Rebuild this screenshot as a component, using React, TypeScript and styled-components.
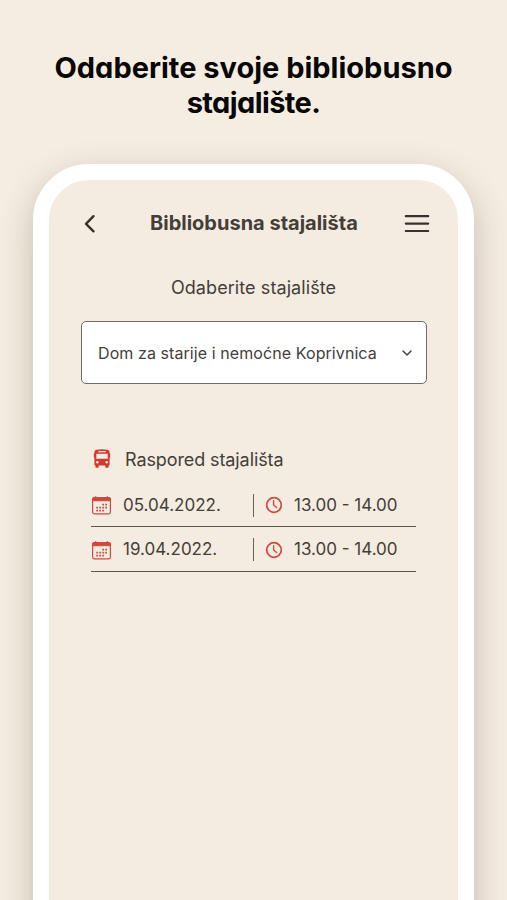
import React from 'react';
import styled, { createGlobalStyle } from 'styled-components';

const GlobalStyle = createGlobalStyle`
  * { box-sizing: border-box; }
  body { margin: 0; background: #f5ede2; }
  svg { flex: none; display: block; }
`;

const Page = styled.main`
  width: 507px;
  height: 900px;
  overflow: hidden;
  display: flex;
  flex-direction: column;
  align-items: center;
  background: #f5ede2;
  color: #443e39;
  font-family: Inter, 'Noto Sans', sans-serif;
`;

const Headline = styled.h1`
  margin: 50px 0 0;
  height: 114px;
  flex: none;
  display: flex;
  flex-direction: column;
  align-items: center;
  color: #080705;
  font-size: 29px;
  line-height: 35px;
  font-weight: 700;
  white-space: nowrap;
  font-feature-settings: 'cv11';
`;

const HeadlineLine = styled.span<{ $track: number }>`
  letter-spacing: ${(p) => p.$track}px;
`;

const Phone = styled.section`
  width: 441px;
  height: 860px;
  flex: none;
  border: 16px solid #fff;
  border-radius: 56px;
  background: #f4ece0;
  box-shadow: 0 12px 34px rgba(86, 72, 56, 0.3);
`;

const TopBar = styled.header`
  height: 86px;
  padding: 0 28px 0 35px;
  display: flex;
  align-items: center;
`;

const Title = styled.h2`
  margin: 0 auto 0 54px;
  font-size: 20px;
  line-height: 24px;
  font-weight: 700;
  white-space: nowrap;
`;

const Prompt = styled.p`
  margin: 10px 0 0;
  font-size: 18px;
  line-height: 24px;
  letter-spacing: 0.08px;
  text-align: center;
`;

const Select = styled.button`
  width: 346px;
  height: 63px;
  margin: 21px 0 0 32px;
  padding: 0 13px 0 16px;
  display: flex;
  align-items: center;
  justify-content: space-between;
  background: #fff;
  border: 1px solid #716b65;
  border-radius: 5px;
  color: inherit;
  font-family: inherit;
  font-size: 16px;
  letter-spacing: 0.08px;
  white-space: nowrap;
`;

const Schedule = styled.section`
  width: 325px;
  margin: 62px 0 0 42px;
`;

const ScheduleTitle = styled.h3`
  margin: 0;
  height: 26px;
  display: flex;
  align-items: center;
  gap: 13px;
  padding-left: 1px;
  font-size: 18px;
  font-weight: 400;
  letter-spacing: -0.1px;
`;

const Rows = styled.div`
  padding-top: 10px;
`;

const Row = styled.div`
  height: 44.5px;
  padding-top: 2px;
  display: grid;
  grid-template-columns: 32px 131px 40px 1fr;
  align-items: center;
  border-bottom: 1px solid #5f5650;
  font-size: 17px;
  line-height: 23px;
  white-space: nowrap;

  &:first-child { height: 45px; }
`;

const DateText = styled.span`
  height: 23px;
  border-right: 1px solid #6b625c;
`;

const ClockSlot = styled.span`
  padding-left: 11px;
`;

const Back = () => (
  <svg width="12" height="20" viewBox="0 0 12 20" fill="none" stroke="#37322e" strokeWidth="2.400" strokeLinecap="round" strokeLinejoin="round">
    <path d="M9.500 3.200 2 10.800 9.500 18.300" />
  </svg>
);

const Menu = () => (
  <svg width="26" height="20" viewBox="0 0 26 20" stroke="#37322e" strokeWidth="2.200" strokeLinecap="round">
    <path d="M1.800 3.200h22.400M1.800 10.600h22.400M1.800 18h22.400" />
  </svg>
);

const Chevron = () => (
  <svg width="12" height="8" viewBox="0 0 12 8" fill="none" stroke="#47413c" strokeWidth="1.500" strokeLinecap="round" strokeLinejoin="round">
    <path d="m2 2 4 4 4-4" />
  </svg>
);

const Bus = () => (
  <svg width="20" height="20" viewBox="0 0 20 20">
    <path
      fill="#cf3a31"
      fillRule="evenodd"
      d="M4.500.800Q10-.200 15.500.800 17.600 1.200 17.600 3.200V4.500h.6v4h-.6V15.600q0 .9-1 .9V18q0 .8-.8.8h-1.700q-.8 0-.8-.8V16.500H6.700V18q0 .8-.8.8H4.200q-.8 0-.8-.8V16.500q-1 0-1-.9V8.500h-.6v-4h.6V3.200Q2.400 1.200 4.500.800ZM6.300 1.900v1.300h7.400V1.900ZM4.300 4.800v5h11.400v-5ZM5.300 11.900a1.300 1.300 0 1 0 .01 0ZM14.700 11.900a1.300 1.300 0 1 0 .01 0Z"
    />
  </svg>
);

const Calendar = () => (
  <svg width="21" height="20" viewBox="0 0 21 20" fill="none" stroke="#d0483f">
    <rect x="1.600" y="2.500" width="17.800" height="16.300" rx="1.800" strokeWidth="1.200" />
    <path d="M1.600 5.700V4.300q0-1.800 1.800-1.800h14.200q1.800 0 1.800 1.800v1.400Z" fill="#d0483f" />
    <path d="M4.700 1.300v3M16.300 1.300v3" strokeWidth="1.300" />
    <path d="M11.300 9.700h6M5.300 12.700h12M5.300 15.700h9" strokeWidth="1.700" strokeDasharray="1.700 1.300" />
  </svg>
);

const Clock = () => (
  <svg width="18" height="18" viewBox="0 0 18 18" fill="none" stroke="#cf4a43" strokeWidth="1.700" strokeLinecap="round">
    <circle cx="9" cy="9" r="7.300" />
    <path d="M8.600 4.800V9l3 2.500" strokeWidth="1.400" />
  </svg>
);

const dates = ['05.04.2022.', '19.04.2022.'];

export default function App() {
  return (
    <Page>
      <GlobalStyle />
      <Headline>
        <HeadlineLine $track={0}>Odaberite svoje bibliobusno</HeadlineLine>
        <HeadlineLine $track={-0.6}>stajalište.</HeadlineLine>
      </Headline>
      <Phone>
        <TopBar>
          <Back />
          <Title>Bibliobusna stajališta</Title>
          <Menu />
        </TopBar>
        <Prompt>Odaberite stajalište</Prompt>
        <Select type="button">
          <span>Dom za starije i nemoćne Koprivnica</span>
          <Chevron />
        </Select>
        <Schedule>
          <ScheduleTitle>
            <Bus />
            <span>Raspored stajališta</span>
          </ScheduleTitle>
          <Rows>
            {dates.map((date) => (
              <Row key={date}>
                <Calendar />
                <DateText>{date}</DateText>
                <ClockSlot>
                  <Clock />
                </ClockSlot>
                <span>13.00 - 14.00</span>
              </Row>
            ))}
          </Rows>
        </Schedule>
      </Phone>
    </Page>
  );
}
